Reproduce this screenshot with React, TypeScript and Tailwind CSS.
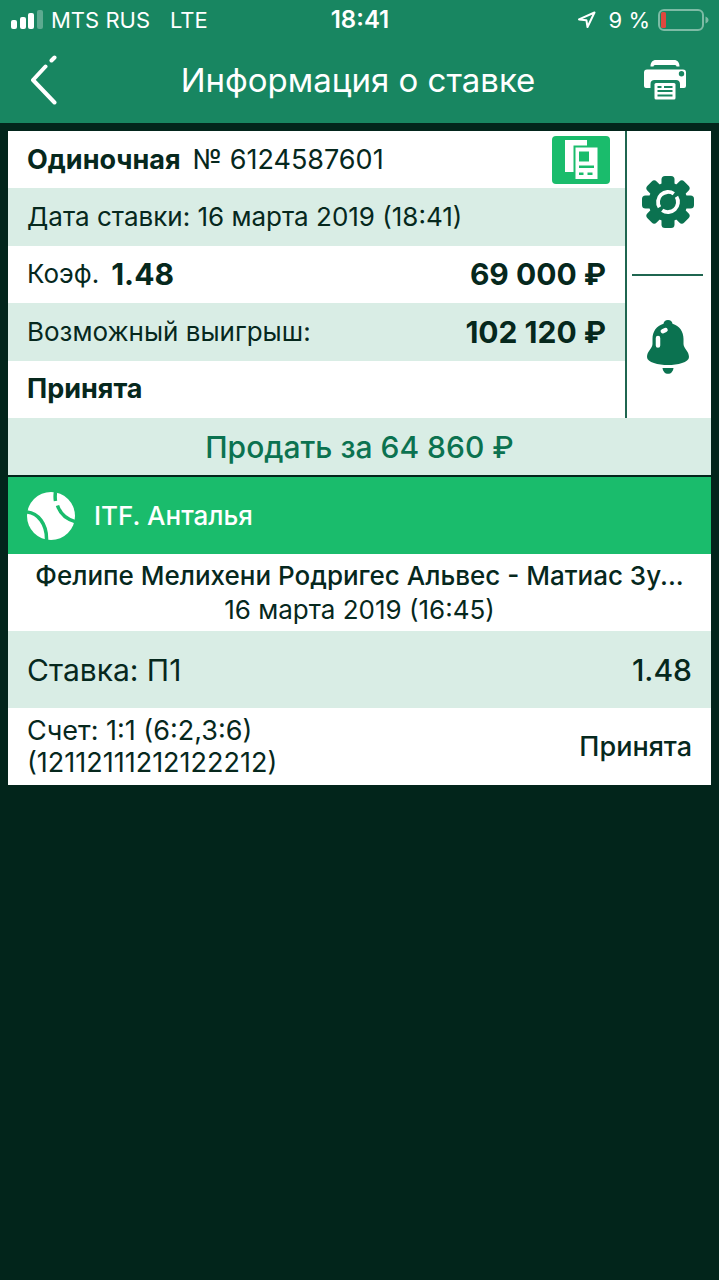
import type { ReactNode } from "react";

function SignalIcon() {
  return (
    <svg width="32" height="20" viewBox="0 0 32 20" fill="#fff" aria-hidden="true">
      <rect x="0" y="10" width="6" height="9" rx="2" />
      <rect x="9" y="7" width="6" height="12" rx="2" />
      <rect x="17" y="3" width="6" height="16" rx="2" />
      <rect x="26" y="0" width="6" height="19" rx="2" opacity="0.3" />
    </svg>
  );
}

function LocationIcon() {
  return (
    <svg width="20" height="18" viewBox="0 0 20 18" fill="none" aria-hidden="true">
      <path d="M17.5 1.5 10.5 16 9.4 9.2 2 8.4Z" stroke="#fff" strokeWidth="2" strokeLinejoin="round" />
    </svg>
  );
}

function BatteryIcon() {
  return (
    <svg width="51" height="22" viewBox="0 0 51 22" fill="none" aria-hidden="true">
      <rect x="1" y="1" width="44" height="20" rx="5" stroke="#7dbba5" strokeWidth="2" />
      <rect x="3" y="3" width="5" height="16" rx="1.5" fill="#e0483e" />
      <path d="M47.5 7.5c4 1.500 4 5.500 0 7z" fill="#7dbba5" />
    </svg>
  );
}

function BackIcon() {
  return (
    <svg width="28" height="50" viewBox="0 0 28 50" fill="none" stroke="#fff" strokeWidth="4" strokeLinecap="round" aria-hidden="true">
      <path d="M21.500 5.500 24.500 2.500M15.500 11.500 3 25 24.500 47.500" strokeLinejoin="round" />
    </svg>
  );
}

function PrinterIcon() {
  return (
    <svg width="42" height="40" viewBox="0 0 42 40" aria-hidden="true">
      <path d="M6.500 6.500C6.500 2.500 8.500 0 12 0h18c3.500 0 5.500 2.500 5.500 6.500h-3c0-1-.8-1.500-2-1.500h-19c-1.200 0-2 .5-2 1.500z" fill="#fff" />
      <path
        fillRule="evenodd"
        d="M3 9.500h36a3 3 0 0 1 3 3V26a2 2 0 0 1-2 2h-4v-4c0-2.500-1.500-4-4-4H10.500c-2.500 0-4 1.500-4 4v4H2a2 2 0 0 1-2-2V12.500a3 3 0 0 1 3-3zM37.500 11a2.700 2.700 0 1 0 0 5.400 2.700 2.700 0 0 0 0-5.400z"
        fill="#fff"
      />
      <rect x="10.500" y="23" width="21" height="16.500" rx="1.500" fill="#fff" />
      <path d="M13.500 27h4M20 27h8.500M13.500 31h15M13.500 35.500h15" stroke="#188661" strokeWidth="1.800" />
    </svg>
  );
}

function CouponIcon() {
  return (
    <svg width="34" height="40" viewBox="0 0 34 40" aria-hidden="true">
      <path d="M1 0h22v5.500H9.500V32H1z" fill="#fff" />
      <path
        fillRule="evenodd"
        d="M11.500 7.500h22v31.500h-22zM15 11.500v10h10v-10zM15 25.500V28H30v-2.500zM15 32.500v2.500h4.500v-2.500zM23.500 32.500v2.500h5v-2.500z"
        fill="#fff"
      />
    </svg>
  );
}

function GearIcon() {
  const teeth = [0, 45, 90, 135, 180, 225, 270, 315];
  return (
    <svg width="52" height="52" viewBox="-26 -26 52 52" aria-hidden="true">
      <g fill="#0b7250">
        {teeth.map((angle) => (
          <rect key={angle} x="-6.500" y="-26" width="13" height="14" rx="3.500" transform={`rotate(${angle})`} />
        ))}
        <circle r="19.500" />
      </g>
      <g fill="none" stroke="#fff" strokeWidth="3.800">
        <path d="M-8.500 5.200A10 10 0 0 1 5.800-8.200" />
        <path d="M8.500-5.200A10 10 0 0 1-5.800 8.200" />
      </g>
    </svg>
  );
}

function BellIcon() {
  return (
    <svg width="42" height="54" viewBox="0 0 42 54" aria-hidden="true">
      <path
        d="M21 0c2.500 0 4.300 1.500 4.500 3.800C32.500 6 36.500 11.500 36.500 19v5c0 4.500 5.500 7 5.500 13 0 5.500-11.500 8-21 8S0 42.500 0 37c0-6 5.500-8.500 5.500-13v-5c0-7.500 4-13 11-15.200C16.700 1.500 18.500 0 21 0z"
        fill="#0b7250"
      />
      <path d="M15.500 48h11c-.5 3.500-2.500 5.800-5.500 5.800S16 51.500 15.500 48z" fill="#0b7250" />
      <path d="M11 18v7.500M15.800 11.200 18.500 10" stroke="#fff" strokeWidth="4.500" strokeLinecap="round" />
    </svg>
  );
}

function TennisIcon() {
  return (
    <svg width="48" height="48" viewBox="0 0 48 48" fill="none" aria-hidden="true">
      <circle cx="24" cy="24" r="24" fill="#fff" />
      <path d="M0 20c11 1 20 12 19.500 28M28.500 0c-.5 3-.5 6 0 9M30.500 13.500C33 21 39 27 48 29.500" stroke="#1abc6c" strokeWidth="3.500" />
    </svg>
  );
}

function Row({ shaded, children }: { shaded?: boolean; children: ReactNode }) {
  return (
    <div className={`flex items-center justify-between px-[19px] ${shaded ? "bg-[#d9ede5]" : "bg-white"}`}>
      {children}
    </div>
  );
}

export default function App() {
  return (
    <div className="min-h-screen bg-[#02251b] font-['Inter','Liberation_Sans',sans-serif] text-[26px] leading-8 text-[#06281d]">
      <header className="bg-[#188661] pb-[3px] text-white">
        <div className="grid h-10 grid-cols-3 items-center pl-[11px] pr-[10px] text-[22px]">
          <div className="flex items-center gap-2">
            <SignalIcon />
            <span className="whitespace-nowrap">MTS RUS</span>
            <span className="ml-3">LTE</span>
          </div>
          <span className="text-center text-[24px] font-semibold">18:41</span>
          <div className="flex items-center justify-end gap-2">
            <LocationIcon />
            <span className="ml-1 whitespace-nowrap">9 %</span>
            <BatteryIcon />
          </div>
        </div>
        <div className="flex h-20 items-center justify-between pl-[30px] pr-[33px]">
          <button type="button" aria-label="Назад" className="w-[42px]">
            <BackIcon />
          </button>
          <h1 className="text-[33px] leading-10">Информация о ставке</h1>
          <button type="button" aria-label="Печать">
            <PrinterIcon />
          </button>
        </div>
      </header>

      <main className="p-2">
        <section className="bg-white">
          <div className="flex">
            <div className="grid min-h-[287px] flex-1 auto-rows-fr border-r-2 border-[#1f6650]">
              <Row>
                <div className="flex gap-3 text-[27px]">
                  <span className="font-bold">Одиночная</span>
                  <span>№ 6124587601</span>
                </div>
                <button
                  type="button"
                  aria-label="Купон"
                  className="-mr-1 flex h-12 w-[58px] items-center justify-center rounded bg-[#1abc6c]"
                >
                  <CouponIcon />
                </button>
              </Row>
              <Row shaded>
                <span>Дата ставки: 16 марта 2019 (18:41)</span>
              </Row>
              <Row>
                <div className="flex items-center gap-3">
                  <span>Коэф.</span>
                  <span className="text-[30px] font-bold">1.48</span>
                </div>
                <span className="text-[30px] font-bold">69 000 ₽</span>
              </Row>
              <Row shaded>
                <span>Возможный выигрыш:</span>
                <span className="text-[30px] font-bold">102 120 ₽</span>
              </Row>
              <Row>
                <span className="text-[27px] font-bold">Принята</span>
              </Row>
            </div>
            <div className="flex w-[84px] flex-col pl-[5px] pr-2">
              <button type="button" aria-label="Настройки" className="flex flex-1 items-center justify-center border-b-2 border-[#1f6650]">
                <GearIcon />
              </button>
              <button type="button" aria-label="Уведомления" className="flex flex-1 items-center justify-center">
                <BellIcon />
              </button>
            </div>
          </div>
          <button type="button" className="flex h-[57px] w-full items-center justify-center bg-[#d9ede5] text-[30px] font-medium text-[#0b7250]">
            Продать за 64 860 ₽
          </button>
        </section>

        <section className="border-t-2 border-[#02251b] bg-white">
          <div className="flex h-[77px] items-center gap-[19px] bg-[#1abc6c] px-[19px] font-medium text-white">
            <TennisIcon />
            <h2>ITF. Анталья</h2>
          </div>
          <div className="flex h-[77px] flex-col justify-center px-[19px] text-center">
            <p className="truncate font-medium leading-[34px]">Фелипе Мелихени Родригес Альвес - Матиас Зу...</p>
            <p className="leading-[34px]">16 марта 2019 (16:45)</p>
          </div>
          <div className="flex h-[77px] items-center justify-between bg-[#d9ede5] px-[19px] text-[30px]">
            <span>Ставка: П1</span>
            <span className="font-medium">1.48</span>
          </div>
          <div className="flex h-[77px] items-center justify-between px-[19px]">
            <p className="text-[27px] leading-8">
              Счет: 1:1 (6:2,3:6)
              <br />
              (12112111212122212)
            </p>
            <span className="text-[27px] font-medium">Принята</span>
          </div>
        </section>
      </main>
    </div>
  );
}
